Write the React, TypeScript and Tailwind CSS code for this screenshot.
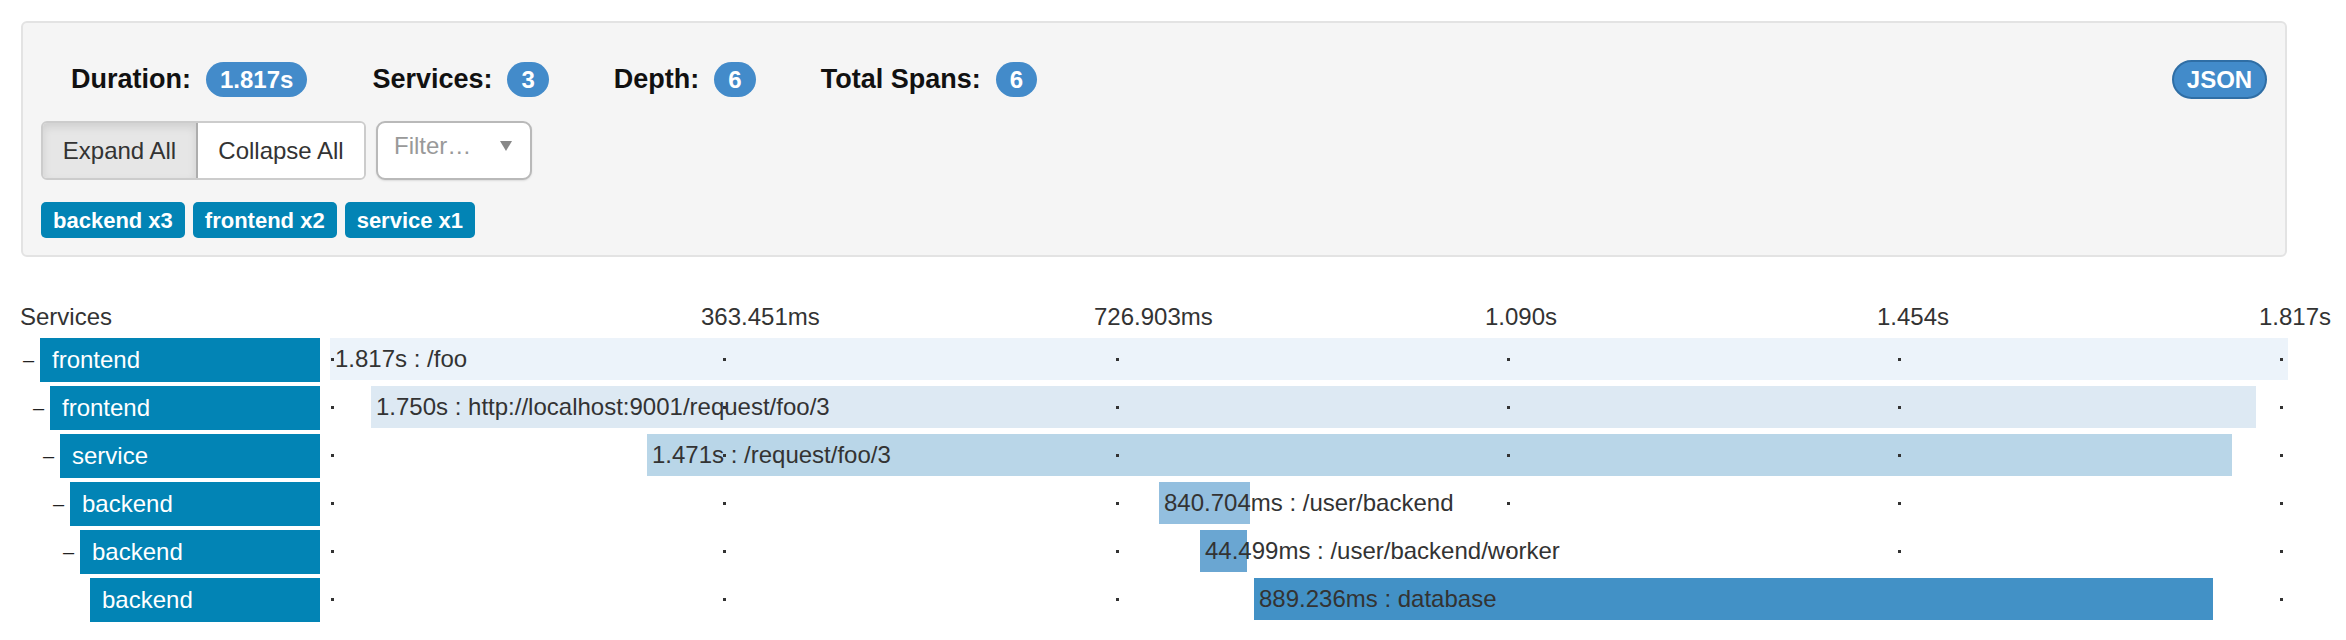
import React from 'react';

const stats = [
  { label: 'Duration:', value: '1.817s' },
  { label: 'Services:', value: '3' },
  { label: 'Depth:', value: '6' },
  { label: 'Total Spans:', value: '6' },
];

const serviceTags = ['backend x3', 'frontend x2', 'service x1'];

// timeline is 1958px wide, starting 330px from the page edge
const ticks = [
  { label: '363.451ms', left: 371 },
  { label: '726.903ms', left: 764 },
  { label: '1.090s', left: 1155 },
  { label: '1.454s', left: 1547 },
  { label: '1.817s', left: 1929 },
];
const tickDots = [1, 393, 786, 1177, 1568, 1950];

const spans = [
  { name: 'frontend', indent: 'pl-[23px]', toggle: true, left: 0, width: 1958, color: 'bg-[#ecf3fa]', text: '1.817s : /foo', covers: false },
  { name: 'frontend', indent: 'pl-[33px]', toggle: true, left: 41, width: 1885, color: 'bg-[#dde9f3]', text: '1.750s : http://localhost:9001/request/foo/3', covers: false },
  { name: 'service', indent: 'pl-[43px]', toggle: true, left: 317, width: 1585, color: 'bg-[#b9d6e8]', text: '1.471s : /request/foo/3', covers: false },
  { name: 'backend', indent: 'pl-[53px]', toggle: true, left: 829, width: 91, color: 'bg-[#93bfdf]', text: '840.704ms : /user/backend', covers: false },
  { name: 'backend', indent: 'pl-[63px]', toggle: true, left: 870, width: 47, color: 'bg-[#6aa6d2]', text: '44.499ms : /user/backend/worker', covers: false },
  { name: 'backend', indent: 'pl-[73px]', toggle: false, left: 924, width: 959, color: 'bg-[#4291c6]', text: '889.236ms : database', covers: true },
];

function TracePanel() {
  return (
    <div className="ml-[21px] mt-[21px] w-[2266px] rounded-[6px] border-2 border-[#e3e3e3] bg-[#f5f5f5] px-[18px] pb-[17px] pt-[37px]">
      {/* summary */}
      <div className="flex h-[39px] items-center justify-between">
        <div className="flex items-center gap-[65px] pl-[30px]">
          {stats.map((s) => (
            <div key={s.label} className="flex items-center gap-[15px]">
              <span className="text-[27px] font-bold text-[#111]">{s.label}</span>
              <span className="flex h-[35px] items-center rounded-full bg-[#438bca] px-[14px] text-[24px] font-bold text-white">
                {s.value}
              </span>
            </div>
          ))}
        </div>
        <button className="flex h-[39px] w-[95px] items-center justify-center rounded-full border-2 border-[#2f6ea5] bg-[#428bca] text-[24px] font-bold text-white">
          JSON
        </button>
      </div>

      {/* controls */}
      <div className="mt-[22px] flex h-[59px] items-stretch gap-[10px]">
        <div className="flex overflow-hidden rounded-[6px] border-2 border-[#cccccc]">
          <button className="w-[155px] border-r-2 border-[#adadad] bg-[#e6e6e6] text-[24px] text-[#333] shadow-[inset_0_4px_8px_rgba(0,0,0,0.1)]">
            Expand All
          </button>
          <button className="w-[166px] bg-white text-[24px] text-[#333]">Collapse All</button>
        </div>
        <div className="flex w-[156px] items-center justify-between rounded-[9px] border-2 border-[#b9b9b9] bg-white pb-[10px] pl-[16px] pr-[18px] shadow-[0_1px_2px_rgba(0,0,0,0.1)]">
          <span className="text-[24px] text-[#999]">Filter…</span>
          <svg viewBox="0 0 12 10" className="h-[10px] w-[12px]">
            <path d="M0 0h12L6 10z" fill="#888" />
          </svg>
        </div>
      </div>

      {/* service tags */}
      <div className="mt-[22px] flex gap-[8px]">
        {serviceTags.map((t) => (
          <span key={t} className="flex h-[36px] items-center rounded-[5px] bg-[#0284b5] px-[12px] text-[22px] font-bold text-white">
            {t}
          </span>
        ))}
      </div>
    </div>
  );
}

function Timeline() {
  return (
    <div className="mt-[45px]">
      <div className="flex h-[30px] items-center text-[24px] leading-[30px] text-[#333]">
        <div className="w-[330px] shrink-0 pl-[20px]">Services</div>
        <div className="relative h-full w-[1958px] shrink-0">
          {ticks.map((t) => (
            <span key={t.label} className="absolute top-0 whitespace-nowrap" style={{ left: t.left }}>
              {t.label}
            </span>
          ))}
        </div>
      </div>

      <div className="mt-[6px] flex flex-col gap-[4px]">
        {spans.map((s, i) => (
          <div key={i} className="flex h-[44px]">
            <div className={`flex w-[320px] shrink-0 items-stretch ${s.indent}`}>
              <span className="flex w-[17px] shrink-0 items-center text-[20px] leading-none text-[#222]">
                {s.toggle ? '–' : ''}
              </span>
              <div className="flex flex-1 items-center bg-[#0284b5] pl-[12px] text-[24px] text-white">{s.name}</div>
            </div>
            <div className="relative ml-[10px] w-[1958px] shrink-0">
              {tickDots.map((d) => (
                <span
                  key={d}
                  className={`absolute top-[20px] h-[3px] w-[3px] bg-[#333] ${s.covers ? 'z-0' : 'z-20'}`}
                  style={{ left: d }}
                />
              ))}
              <div
                className={`absolute top-0 z-10 h-[42px] ${s.color}`}
                style={{ left: s.left, width: s.width }}
              >
                <span className="absolute left-[5px] top-0 whitespace-nowrap text-[24px] leading-[42px] text-[#333]">
                  {s.text}
                </span>
              </div>
            </div>
          </div>
        ))}
      </div>
    </div>
  );
}

export default function App() {
  return (
    <div className="h-[640px] w-[2346px] overflow-hidden bg-white font-['Liberation_Sans',Arial,sans-serif]">
      <TracePanel />
      <Timeline />
    </div>
  );
}
